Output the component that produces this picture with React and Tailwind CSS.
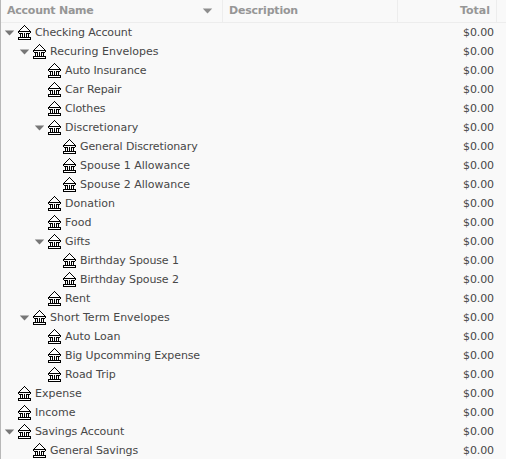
const rows = [
  ["Checking Account", 0, true, true],
  ["Recuring Envelopes", 1, true],
  ["Auto Insurance", 2, false, true],
  ["Car Repair", 2, false, true],
  ["Clothes", 2, false, true],
  ["Discretionary", 2, true],
  ["General Discretionary", 3, false, true],
  ["Spouse 1 Allowance", 3],
  ["Spouse 2 Allowance", 3],
  ["Donation", 2],
  ["Food", 2],
  ["Gifts", 2, true],
  ["Birthday Spouse 1", 3, false, true],
  ["Birthday Spouse 2", 3, false, true],
  ["Rent", 2],
  ["Short Term Envelopes", 1, true],
  ["Auto Loan", 2],
  ["Big Upcomming Expense", 2, false, true],
  ["Road Trip", 2],
  ["Expense", 0],
  ["Income", 0],
  ["Savings Account", 0, true, true],
  ["General Savings", 1, false, true],
];

const indents = ["pl-[3px]", "pl-[18px]", "pl-[33px]", "pl-[48px]"];

function Arrow({ className }) {
  return (
    <svg className={className} width="11" height="6" viewBox="0 0 11 6" fill="currentColor">
      <path d="M0.8 0.5H10.2L5.5 5.5Z" />
    </svg>
  );
}

function Bank() {
  return (
    <svg className="-mt-px shrink-0" width="14" height="15" viewBox="0 0 14 15" shapeRendering="crispEdges">
      <path d="M6 1h1v1h1v1h1v1h1v1h1v1h1v1h-11v-1h1v-1h1v-1h1v-1h1v-1h1zM1 8h11v6h-11z" fill="#fff" />
      <path
        fill="#000"
        d="M6 0h1v1h-1zM5 1h1v1h-1zM7 1h1v1h-1zM4 2h1v1h-1zM8 2h1v1h-1zM3 3h1v1h-1zM9 3h1v1h-1zM2 4h1v1h-1zM10 4h1v1h-1zM1 5h1v1h-1zM11 5h1v1h-1zM0 6h13v1h-13zM0 7h1v1h-1zM12 7h1v1h-1zM1 8h4v1h-4zM6 8h1v1h-1zM8 8h4v1h-4zM2 8h1v4h-1zM4 8h1v4h-1zM6 8h1v4h-1zM8 8h1v4h-1zM10 8h1v4h-1zM1 12h11v1h-11zM0 12h1v2h-1zM12 12h1v2h-1zM0 14h13v1h-13z"
      />
    </svg>
  );
}

export default function App() {
  return (
    <div className="h-[459px] w-[506px] overflow-hidden border-l border-[#b8b8b8] bg-[#f9f9f9] font-['DejaVu_Sans',sans-serif] text-[11px] text-[#474747]">
      <div className="flex h-[23px] border-b border-[#ededed] font-bold leading-[21px] text-[#969696]">
        <div className="flex w-[222px] justify-between border-r border-[#ededed] pl-[6px] pr-[9px]">
          <span className="tracking-[-0.24px]">Account Name</span>
          <Arrow className="mt-[8px] text-[#8e8e8e]" />
        </div>
        <div className="w-[175px] border-r border-[#ededed] pl-[6px] tracking-[-0.2px]">Description</div>
        <div className="w-[99px] border-r border-[#ededed] pr-[6px] text-right">Total</div>
      </div>
      {rows.map(([name, depth, open, tight]) => (
        <div key={name} className={`flex h-[19px] items-center pr-[12px] leading-[19px] ${indents[depth]}`}>
          <div className="w-[14px] shrink-0">{open && <Arrow className="text-[#777]" />}</div>
          <Bank />
          <span className={`ml-[3px] grow whitespace-nowrap ${tight ? "tracking-[-0.12px]" : ""}`}>{name}</span>
          <span className="tracking-[-0.1px]">$0.00</span>
        </div>
      ))}
    </div>
  );
}
